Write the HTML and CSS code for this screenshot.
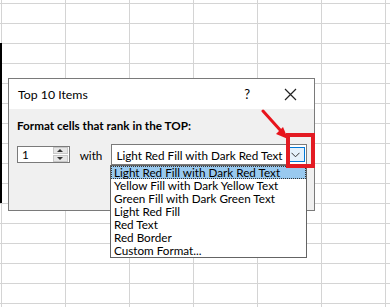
FILE: index.html
```html
<!DOCTYPE html>
<html lang="en">

<head>
    <meta charset="UTF-8">
    <meta name="viewport" content="width=device-width, initial-scale=1.0">
    <title>Top 10 Items</title>
    <link rel="stylesheet" href="styles.css">
</head>

<body>
    <div class="sheet-edge"></div>

    <div class="dialog">
        <div class="title-bar">
            <span class="title">Top 10 Items</span>
            <span class="help">?</span>
            <span class="close">
                <svg width="13" height="13" viewBox="0 0 13 13">
                    <path d="M1 1L12 12M12 1L1 12" stroke="#222" stroke-width="1.2" fill="none" />
                </svg>
            </span>
        </div>
        <div class="dialog-body">
            <div class="heading">Format cells that rank in the TOP:</div>
            <div class="rule-row">
                <div class="spinner">
                    <span class="spinner-value">1</span>
                    <div class="spinner-buttons">
                        <div class="spin up"></div>
                        <div class="spin down"></div>
                    </div>
                </div>
                <span class="with">with</span>
                <div class="combo">
                    <span class="combo-value">Light Red Fill with Dark Red Text</span>
                    <div class="combo-button">
                        <svg width="9" height="6" viewBox="0 0 9 6">
                            <path d="M0.5 0.8L4.5 4.8L8.5 0.8" stroke="#333" stroke-width="1" fill="none" />
                        </svg>
                    </div>
                </div>
            </div>
        </div>
    </div>

    <ul class="dropdown">
        <li class="selected">Light Red Fill with Dark Red Text</li>
        <li>Yellow Fill with Dark Yellow Text</li>
        <li>Green Fill with Dark Green Text</li>
        <li>Light Red Fill</li>
        <li>Red Text</li>
        <li>Red Border</li>
        <li>Custom Format...</li>
    </ul>

    <!-- annotation -->
    <svg class="arrow" width="40" height="40" viewBox="0 0 40 40">
        <path d="M2 2L20 22" stroke="#e8141c" stroke-width="3" stroke-linecap="round" fill="none" />
        <path d="M27 30L15 25L22 18Z" fill="#e8141c" />
    </svg>
    <div class="highlight-box"></div>
</body>

</html>
```

FILE: styles.css
```css
* {
    margin: 0;
    padding: 0;
    box-sizing: border-box;
}

body {
    width: 390px;
    height: 307px;
    overflow: hidden;
    position: relative;
    font-family: Lato, 'Noto Sans', sans-serif;
    font-size: 11.7px;
    color: #000;
    background-color: #fff;
    background-image:
        linear-gradient(to right, #d4d4d4 1px, transparent 1px),
        linear-gradient(to bottom, #d4d4d4 1px, transparent 1px);
    background-size: 64px 20px;
    background-position: 1px 3px;
}

.sheet-edge {
    position: absolute;
    left: 0;
    top: 43px;
    width: 2px;
    height: 160px;
    background-color: #000;
}

.dialog {
    position: absolute;
    left: 8px;
    top: 78px;
    width: 307px;
    height: 133px;
    border: 1px solid #7a7a7a;
    background-color: #f0f0f0;
    display: flex;
    flex-direction: column;
}

.title-bar {
    height: 30px;
    background-color: #fff;
    display: flex;
    align-items: center;
    padding-left: 9px;
    font-size: 12.3px;
}

.title {
    flex: 1;
}

.help {
    font-size: 13px;
    margin-right: 34px;
}

.close {
    display: flex;
    margin-right: 17px;
}

.dialog-body {
    padding: 9px 7px 0 8px;
}

.heading {
    font-weight: bold;
    line-height: 14px;
}

.rule-row {
    display: flex;
    align-items: center;
    margin-top: 12px;
}

.spinner {
    width: 53px;
    height: 17px;
    border: 1px solid #7a7a7a;
    background-color: #fff;
    display: flex;
    align-items: center;
}

.spinner-value {
    flex: 1;
    padding-left: 4px;
    line-height: 15px;
}

.spinner-buttons {
    width: 15px;
    height: 15px;
    display: flex;
    flex-direction: column;
    gap: 1px;
    margin-right: 1px;
}

.spin {
    flex: 1;
    background-color: #e6e6e6;
    border: 1px solid #c8c8c8;
    display: flex;
    align-items: center;
    justify-content: center;
}

.spin::after {
    content: "";
    border-left: 3px solid transparent;
    border-right: 3px solid transparent;
}

.up::after {
    border-bottom: 3px solid #333;
}

.down::after {
    border-top: 3px solid #333;
}

.with {
    margin-left: 10px;
    width: 32px;
}

.combo {
    width: 197px;
    height: 21px;
    border: 1px solid #7a7a7a;
    background-color: #fff;
    display: flex;
    align-items: center;
}

.combo-value {
    flex: 1;
    padding-left: 4px;
    white-space: nowrap;
}

.combo-button {
    width: 19px;
    height: 15px;
    margin-right: 1px;
    border: 1px solid #0078d7;
    background-color: #e5f1fb;
    display: flex;
    align-items: center;
    justify-content: center;
}

.dropdown {
    position: absolute;
    left: 110px;
    top: 165px;
    width: 197px;
    list-style: none;
    background-color: #fff;
    border: 1px solid #646464;
}

.dropdown li {
    height: 13px;
    line-height: 13px;
    padding-left: 3px;
    white-space: nowrap;
}

.dropdown .selected {
    background-color: #99c9ef;
    outline: 1px dotted #333;
    outline-offset: -1px;
}

.arrow {
    position: absolute;
    left: 261px;
    top: 109px;
}

.highlight-box {
    position: absolute;
    left: 286px;
    top: 133px;
    width: 29px;
    height: 35px;
    border: 4px solid #e31b23;
}
```
